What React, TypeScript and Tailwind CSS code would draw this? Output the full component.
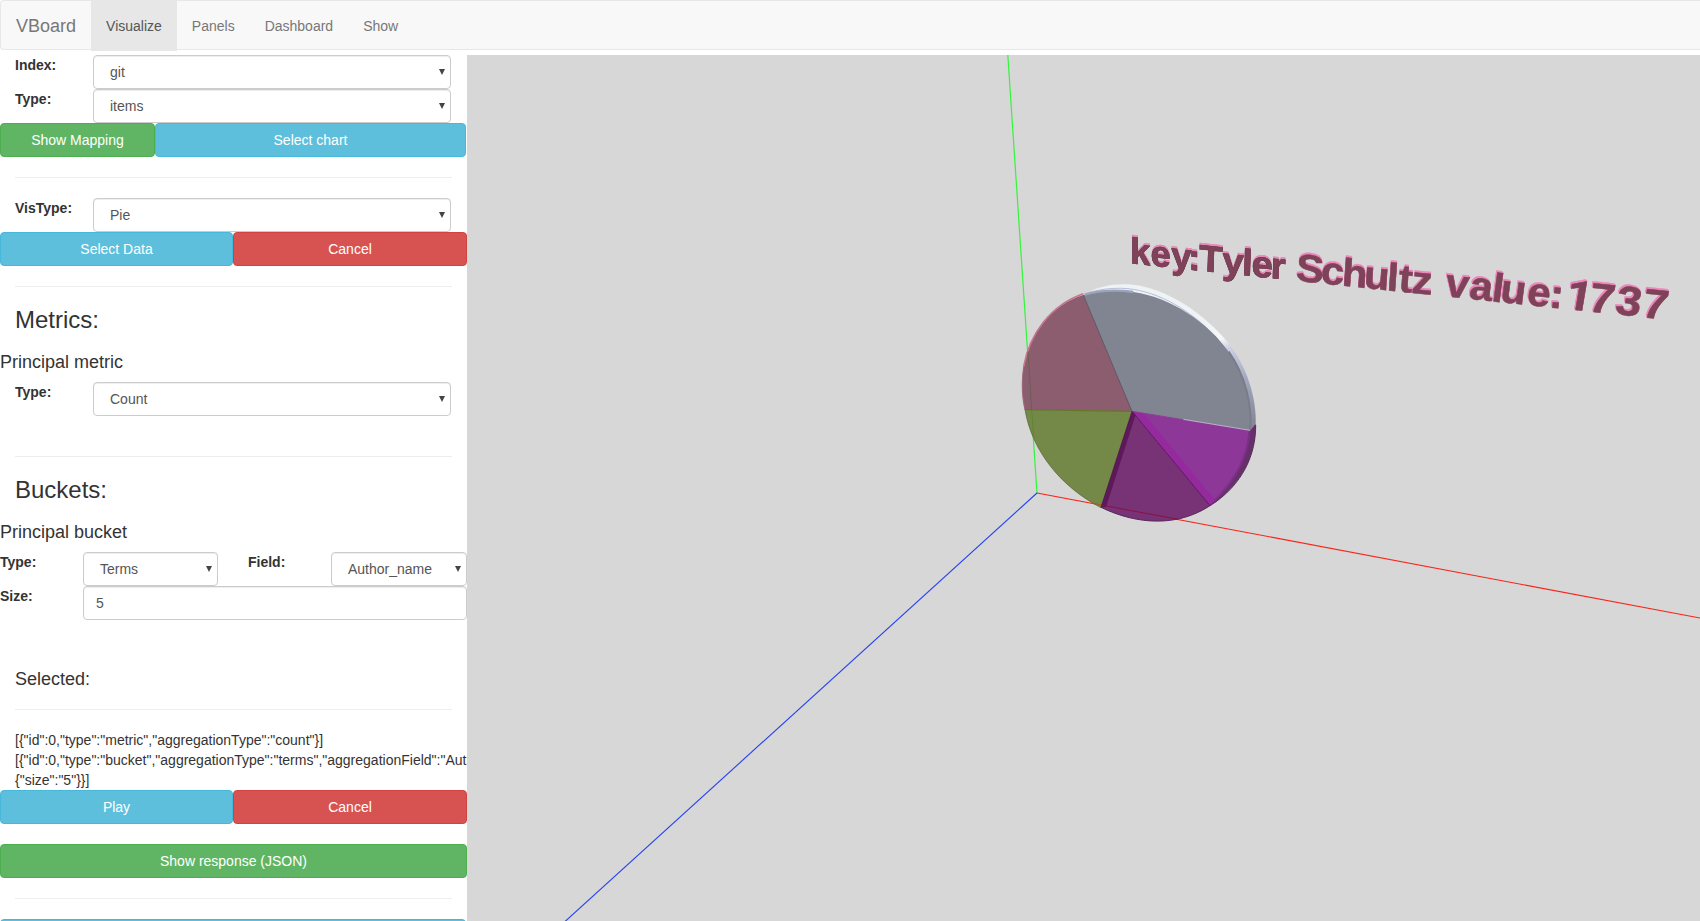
import type { ReactNode } from "react";

const tones = {
  green: "bg-[#60b564] border-[#4cae4c]",
  blue: "bg-[#5dbfdc] border-[#46b8da]",
  red: "bg-[#d75351] border-[#d04341]",
};

function Button({ tone, className = "", children }: { tone: keyof typeof tones; className?: string; children?: ReactNode }) {
  return (
    <button className={`block h-[34px] shrink-0 rounded border text-center text-sm leading-5 text-white ${tones[tone]} ${className}`}>
      {children}
    </button>
  );
}

function Select({ value, className = "" }: { value: string; className?: string }) {
  return (
    <div
      className={`flex h-[34px] items-center justify-between rounded border border-[#ccc] bg-white pl-4 pr-[5px] text-sm text-[#555] shadow-[inset_0_1px_1px_rgba(0,0,0,0.075)] ${className}`}
    >
      <span>{value}</span>
      <svg className="h-[6px] w-[6px] shrink-0" viewBox="0 0 6 6">
        <path d="M0 0H6L3 6Z" fill="#444" />
      </svg>
    </div>
  );
}

function Row({ label, value }: { label: string; value: string }) {
  return (
    <div className="flex pl-[15px] pr-4">
      <label className="w-[78px] text-sm font-bold leading-5">{label}</label>
      <Select value={value} className="flex-1" />
    </div>
  );
}

function Rule() {
  return <hr className="mx-[15px] my-5 border-t border-[#eee]" />;
}

const SLOPE = 0.105;

// Baseline origin of every letter in scene coordinates; `stretch` widens the glyphs and `lean` slants them.
const caption = [
  { text: "key:", size: 36.5, stretch: 1, lean: 0, at: [1130, 1150.5, 1171.3, 1188.3], look: "[filter:drop-shadow(0.8px_0px_0_#56303f)_drop-shadow(0.8px_-1.4px_0_#e58bb9)]" },
  { text: "Tyler", size: 37, stretch: 1.04, lean: -0.03, at: [1198.7, 1222, 1241.7, 1251.3, 1270.3], look: "[filter:drop-shadow(0.6px_0px_0_#56303f)_drop-shadow(0.4px_-1.4px_0_#e58bb9)]" },
  { text: "Schultz", size: 39, stretch: 1.07, lean: -0.07, at: [1295.3, 1320.3, 1341.3, 1363.3, 1386.3, 1398, 1411], look: "[filter:drop-shadow(0.2px_-1px_0_#ee86bb)_drop-shadow(0.2px_-0.7px_0_#ee86bb)]" },
  { text: "value:", size: 40, stretch: 1.04, lean: -0.13, at: [1444.3, 1468.3, 1490.8, 1499.3, 1526, 1548.3], look: "[filter:drop-shadow(-0.2px_-1px_0_#ee86bb)_drop-shadow(0px_-0.6px_0_#ee86bb)]" },
  { text: "1737", size: 41, stretch: 1.12, lean: -0.17, at: [1564, 1587, 1614, 1640.5], look: "[filter:drop-shadow(-0.5px_-1px_0_#ee86bb)_drop-shadow(0px_-0.4px_0_#ee86bb)]" },
];

function Scene() {
  return (
    <svg className="block h-[866px] w-[1233px] shrink-0 bg-[#d7d7d7]" viewBox="467 55 1233 866">
      <defs>
        <linearGradient id="rim" gradientUnits="userSpaceOnUse" x1="620" y1="150" x2="767" y2="465">
          <stop offset="0" stopColor="#eef3f6" />
          <stop offset="0.2" stopColor="#f6f7f9" />
          <stop offset="0.3" stopColor="#cdd0e4" />
          <stop offset="0.6" stopColor="#a5a9c0" />
          <stop offset="1" stopColor="#828694" />
        </linearGradient>
      </defs>
      <path d="M1007.8 55L1037 493" stroke="#33f53c" strokeWidth="1.2" />
      <path d="M1037 493L565 921.5" stroke="#2440f0" strokeWidth="1.1" />
      <path d="M1037 493L1700 618" stroke="#fb2418" strokeWidth="1.1" />

      <g transform="translate(1000 270) scale(0.33333)">
        <path d="M250 75C290 50 335 42 380 43C475 46 592 110 682 215C742 289 770 385 767 465L750 484L396 424Z" fill="url(#rim)" />
        <path d="M256 71C290 58 350 50 400 58C500 74 590 138 655 208" fill="none" stroke="#b9bcdb" strokeWidth="3" />
        <path d="M396 424L250 75C295 62 345 58 400 66C515 82 625 160 686 245C735 315 758 405 750 482Z" fill="#818491" />
        <path d="M254 74C295 62 345 58 400 66" fill="none" stroke="#9ba3b9" strokeWidth="7" />
        <path d="M686 245C735 315 758 405 750 482" fill="none" stroke="#797d8a" strokeWidth="6" />

        <path d="M396 424L250 75C150 105 88 195 71 290C64 340 66 380 75 420Z" fill="#8c5d6e" />
        <path d="M250 71C150 105 88 195 71 290" fill="none" stroke="#c7758f" strokeWidth="5" />
        <path d="M71 290C64 340 66 380 75 420" fill="none" stroke="#9b6577" strokeWidth="3" />
        <path d="M396 424L75 419C96 545 185 652 303 713Z" fill="#748848" />
        <path d="M75 419C96 545 185 652 303 713" fill="none" stroke="#536331" strokeWidth="2" />

        <path d="M750 482L767 462C768 550 732 640 630 708L610 690Z" fill="#67306d" />
        <path d="M396 424L750 482C746 560 706 632 644 692L628 707Z" fill="#8d3899" />
        <path d="M396 424L430 430L646 691L630 707Z" fill="#942a9d" />
        <path d="M748 484C744 560 704 632 644 692" fill="none" stroke="#7a3084" strokeWidth="6" />
        <path d="M396 424L630 707C535 770 414 766 303 712Z" fill="#783276" />
        <path d="M396 424L407 434L318 712L303 712Z" fill="#5e195b" />
        <path d="M303 712C414 766 535 770 630 707C730 645 768 550 767 465" fill="none" stroke="#552a57" strokeWidth="3" />

        <path d="M250 75L396 424" stroke="#4f4d59" strokeWidth="2.4" />
        <path d="M75 419L396 424" stroke="#65762b" strokeWidth="4" />
        <path d="M396 424L750 482" stroke="#8c3c98" strokeWidth="3" />
        <path d="M550 448L750 481" stroke="#c9c2d2" strokeWidth="2.5" />
        <path d="M396 424L630 707" stroke="#641465" strokeWidth="3" />
        <path d="M396 424L303 712" stroke="#46183c" strokeWidth="2" />

        <path d="M84 245L95 420" stroke="#6c604e" strokeWidth="3" />
        <path d="M95 420L101 505" stroke="#588832" strokeWidth="3" />
        <path d="M275 699L303 705" stroke="#a35b22" strokeWidth="3" />
        <path d="M303 705L535 748" stroke="#8c1144" strokeWidth="3" />
      </g>

      <g fill="#7e4259" fontFamily="'Liberation Sans', Arial, sans-serif" fontWeight="700">
        {caption.map(({ text, size, stretch, lean, at, look }) => (
          <g key={text} className={look}>
            <text
              transform={`matrix(${stretch} ${SLOPE * stretch} ${lean} 1 ${at[0]} ${263.5 + SLOPE * (at[0] - 1132)})`}
              x={at.map((x) => (x - at[0]) / stretch).join(" ")}
              y="0"
              fontSize={size}
              stroke="#7e4259"
              strokeWidth="0.5"
            >
              {text.startsWith("1") ? (
                <>
                  <tspan fontFamily="Roboto, sans-serif">1</tspan>
                  {text.slice(1)}
                </>
              ) : (
                text
              )}
            </text>
          </g>
        ))}
      </g>
    </svg>
  );
}

export default function App() {
  return (
    <div className="flex h-[921px] w-[1700px] flex-col overflow-hidden bg-white font-['Liberation_Sans',Arial,sans-serif] text-sm leading-5 text-[#333]">
      <nav className="mb-[5px] flex h-[50px] shrink-0 rounded-l border border-r-0 border-[#e7e7e7] bg-[#f8f8f8] text-[#777]">
        <a className="px-[15px] pt-[15px] text-lg leading-5">VBoard</a>
        <a className="h-[50px] bg-[#e7e7e7] p-[15px] text-[#555]">Visualize</a>
        <a className="p-[15px]">Panels</a>
        <a className="p-[15px]">Dashboard</a>
        <a className="p-[15px]">Show</a>
      </nav>

      <div className="flex h-[866px]">
        <aside className="h-[866px] w-[467px] shrink-0 overflow-hidden">
          <Row label="Index:" value="git" />
          <Row label="Type:" value="items" />
          <div className="flex">
            <Button tone="green" className="w-[155px]">Show Mapping</Button>
            <Button tone="blue" className="w-[311px]">Select chart</Button>
          </div>
          <Rule />
          <Row label="VisType:" value="Pie" />
          <div className="flex">
            <Button tone="blue" className="w-[233px]">Select Data</Button>
            <Button tone="red" className="w-[234px]">Cancel</Button>
          </div>
          <Rule />
          <h3 className="mb-[19px] px-[15px] text-2xl leading-[26px]">Metrics:</h3>
          <h4 className="mb-[10px] text-lg leading-5">Principal metric</h4>
          <Row label="Type:" value="Count" />
          <div className="h-5" />
          <Rule />
          <h3 className="mb-[19px] px-[15px] text-2xl leading-[26px]">Buckets:</h3>
          <h4 className="mb-[10px] text-lg leading-5">Principal bucket</h4>
          <div className="flex">
            <label className="w-[83px] font-bold">Type:</label>
            <Select value="Terms" className="w-[135px]" />
            <label className="ml-[30px] w-[83px] font-bold">Field:</label>
            <Select value="Author_name" className="w-[136px]" />
          </div>
          <div className="flex">
            <label className="w-[83px] font-bold">Size:</label>
            <div className="flex h-[34px] flex-1 items-center rounded border border-[#ccc] pl-3 text-[#555] shadow-[inset_0_1px_1px_rgba(0,0,0,0.075)]">5</div>
          </div>
          <h4 className="mt-[49px] px-[15px] text-lg leading-5">Selected:</h4>
          <Rule />
          <div className="whitespace-nowrap px-[15px]">
            <p>{'[{"id":0,"type":"metric","aggregationType":"count"}]'}</p>
            <p>{'[{"id":0,"type":"bucket","aggregationType":"terms","aggregationField":"Auth'}</p>
            <p>{'{"size":"5"}}]'}</p>
          </div>
          <div className="mb-5 flex">
            <Button tone="blue" className="w-[233px]">Play</Button>
            <Button tone="red" className="w-[234px]">Cancel</Button>
          </div>
          <Button tone="green" className="w-full">Show response (JSON)</Button>
          <Rule />
          <Button tone="blue" className="w-[466px]" />
        </aside>
        <Scene />
      </div>
    </div>
  );
}
